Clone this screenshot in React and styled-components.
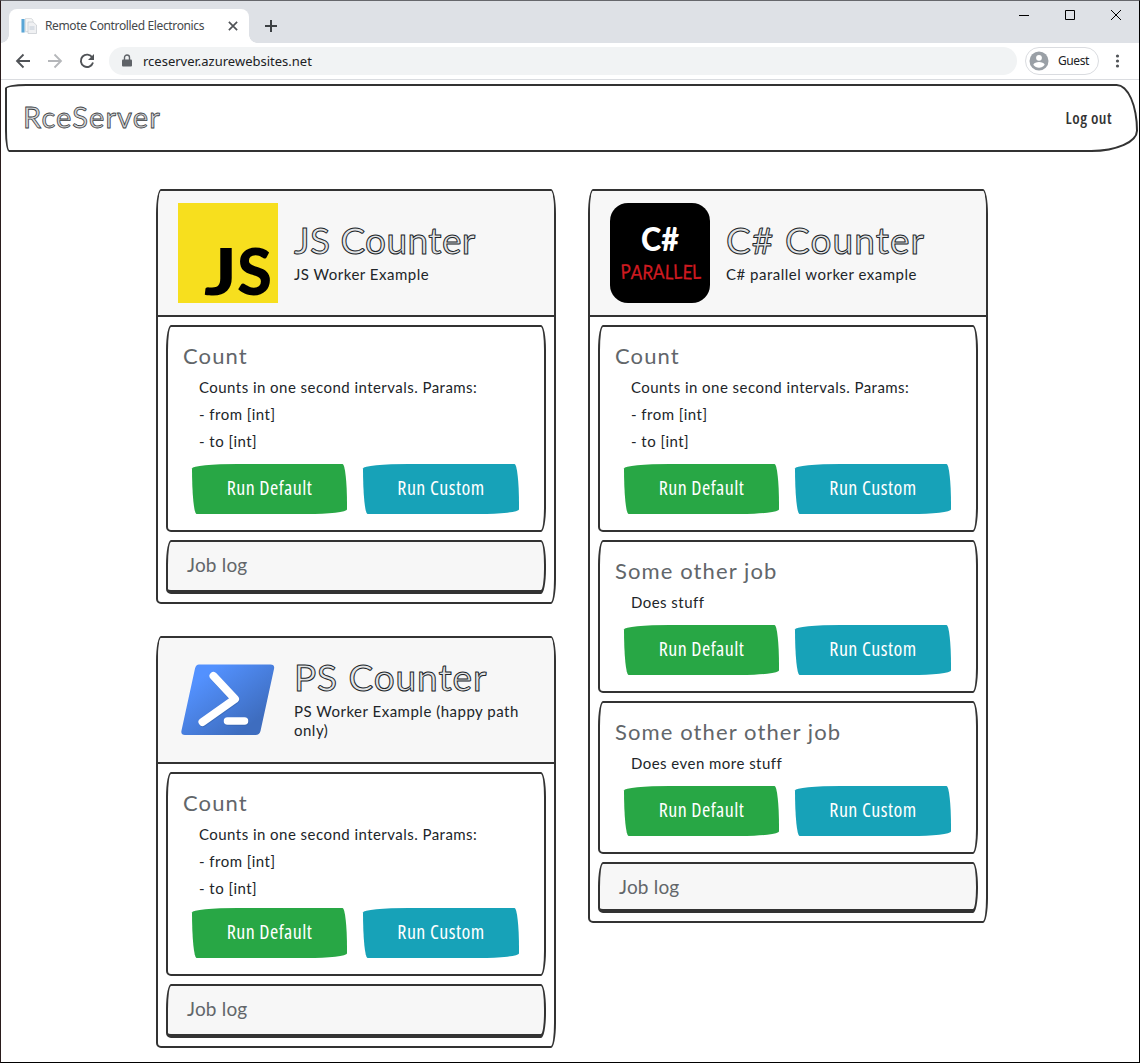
import React from 'react';
import styled, { createGlobalStyle, css } from 'styled-components';

const Global = createGlobalStyle`
  *, *::before, *::after { box-sizing: border-box; }
  body { margin: 0; background: #fff; overflow: hidden; }
`;

const ui = '"Noto Sans", "Open Sans", sans-serif';
const sketch = 'Lato, "Open Sans", sans-serif';
const hand = '"Open Sans", "Noto Sans", sans-serif';
const ink = '#333';

const Window = styled.div`
  width: 1140px; height: 1063px; display: flex; flex-direction: column;
  border: 1px solid #000; border-top-color: #66676c; border-left-color: #2a1c1c;
  background: #fff;
`;
const TabStrip = styled.div`
  height: 42px; flex: none; display: flex; align-items: flex-end;
  background: #dee1e6; padding-left: 8px;
`;
const Tab = styled.div`
  position: relative; width: 240px; height: 34px; display: flex; align-items: center;
  padding: 0 10px 0 12px; background: #fff; border-radius: 8px 8px 0 0;
  &::before, &::after {
    content: ''; position: absolute; bottom: 0; width: 8px; height: 8px;
  }
  &::before { left: -8px; background: radial-gradient(circle at 0 0, transparent 7.5px, #fff 8px); }
  &::after { right: -8px; background: radial-gradient(circle at 100% 0, transparent 7.5px, #fff 8px); }
`;
const TabTitle = styled.span`
  flex: 1; margin-left: 8px; font: 12px/16px ${ui}; letter-spacing: -0.36px; color: #45484c; white-space: nowrap;
`;
const NewTab = styled.div`
  display: flex; align-items: center; height: 34px; margin-left: 14px;
`;
const Controls = styled.div`
  display: flex; align-self: flex-start; gap: 36px; margin: 8px 18px 0 auto;
`;
const Toolbar = styled.div`
  height: 37px; flex: none; display: flex; align-items: center;
  border-bottom: 1px solid #dadce0; padding: 0 14px 0 14px;
`;
const NavIcons = styled.div`display: flex; gap: 16px;`;
const Address = styled.div`
  flex: 1; height: 28px; margin: 0 8px 0 14px; padding-left: 12px; border-radius: 14px;
  display: flex; align-items: center; gap: 10px; background: #f1f3f4;
  font: 13px/18px ${ui}; color: #202124;
`;
const Guest = styled.div`
  width: 74px; height: 28px; display: flex; align-items: center; gap: 9px; padding-left: 3px;
  border: 1px solid #dadce0; border-radius: 14px; font: 12px/16px ${ui}; letter-spacing: -.4px; color: #202124;
  margin-right: 10px;
`;
const Navbar = styled.header`
  flex: none; height: 68px; margin: 4px 1px 0 4px; padding: 0 24px 0 16px;
  display: flex; align-items: center; justify-content: space-between;
  border: 2px solid ${ink}; border-radius: 25px 25px 55px 5px / 5px 55px 25px 25px;
`;
const outline = css`
  font-family: ${sketch}; font-weight: 400; white-space: nowrap; margin: 0;
`;
const Brand = styled.h1`
  ${outline} font-size: 29px; line-height: 36px; letter-spacing: 1.15px; padding-bottom: 3px;
  color: #d3d6d8; -webkit-text-stroke: .8px #3d4043;
`;
const Logout = styled.a`
  font: 600 16px/20px ${hand}; font-stretch: 75%; letter-spacing: .5px; color: ${ink};
`;
const Board = styled.main`
  display: flex; align-items: flex-start; gap: 32px; padding: 37px 0 0 155px;
`;
const Column = styled.div`display: flex; flex-direction: column; gap: 32px; width: 400px;`;
const Card = styled.section`
  border: 2px solid ${ink}; border-radius: 5px 5px 5px 5px / 25px 25px 25px 5px; overflow: hidden;
`;
const CardHeader = styled.div`
  height: 126px; display: flex; align-items: center; gap: 16px; padding: 0 20px;
  background: #f7f7f7; border-bottom: 2px solid ${ink};
`;
const Heading = styled.div`flex: 1; min-width: 0; padding-bottom: 1px;`;
const Name = styled.h2`
  ${outline} font-size: 37px; line-height: 36px; padding-bottom: 7px; letter-spacing: ${p => p.$track}px;
  color: #e3e5e7; -webkit-text-stroke: 1px #212529;
`;
const Sub = styled.div`
  font: 15px/19px ${sketch}; letter-spacing: .5px; color: #212529;
`;
const CardBody = styled.div`display: flex; flex-direction: column; gap: 8px; padding: 8px;`;
const frame = css`
  border: 2px solid ${ink}; border-radius: 5px 5px 5px 5px / 25px 25px 25px 5px;
`;
const Job = styled.article`${frame} padding: 15px 15px 16px;`;
const JobTitle = styled.h3`
  ${outline} font-size: 22px; line-height: 28px; margin-bottom: 4px; letter-spacing: 1.1px;
  color: #62666a;
`;
const Line = styled.div`
  padding-left: 16px; font: 15px/27px ${sketch}; letter-spacing: .46px; color: #212529; white-space: nowrap;
`;
const Buttons = styled.div`
  display: grid; grid-template-columns: 155px 1fr; gap: 16px; margin: ${p => p.$gap + 1}px 10px 0 9px;
`;
const Button = styled.button`
  height: 50px; padding: 0 0 2px; border: 0; color: #fff; background: ${p => p.$color};
  border-radius: 255px 25px 225px 25px / 25px 225px 25px 255px;
  font: 400 20px/24px ${hand}; font-stretch: 78%; letter-spacing: .45px;
`;
const Log = styled.div`
  ${frame} border-bottom-width: 4px; height: ${p => p.$height}px; padding: 9px 19px;
  background: #f7f7f7;
`;
const LogTitle = styled(JobTitle)`font-size: 19px; margin: 0; letter-spacing: .2px;`;

const TabIcon = () => (
  <svg width="16" height="16" viewBox="0 0 16 16">
    <path d="M.5 1H12v13.500H.5z" fill="#e4edf3" />
    <path d="M.5 1h3v13.500h-3z" fill="#5aa6d6" />
    <path d="M4.500.5h6l1.500 2v11h-7.500z" fill="#f6f6f6" stroke="#d2d5d9" strokeWidth=".7" />
    <path d="M7 4h5l3.500 3v8.500H7z" fill="#f0f1f3" stroke="#c4c8ce" strokeWidth=".7" />
    <path d="M8.500 9h5M8.500 11h5" stroke="#c0cad6" />
  </svg>
);
const Stroke = ({ size = 16, d, color = '#505357', w = 1.8 }) => (
  <svg width={size} height={size} viewBox="0 0 16 16" fill="none" stroke={color} strokeWidth={w}><path d={d} /></svg>
);
const Logo = styled.svg`flex: none; overflow: visible;`;
const JsLogo = () => (
  <Logo width="100" height="100" viewBox="0 0 100 100">
    <path d="M0 0h100v100H0z" fill="#f7df1e" />
    <g fontFamily="Lato" fontWeight="900" fontSize="64">
      <text x="26" y="92" textLength="33" lengthAdjust="spacingAndGlyphs">J</text>
      <text x="59" y="92" textLength="35" lengthAdjust="spacingAndGlyphs">S</text>
    </g>
  </Logo>
);
const CsLogo = () => (
  <Logo width="100" height="100" viewBox="0 0 100 100">
    <rect width="100" height="100" rx="18" />
    <text x="31" y="48" textLength="38" lengthAdjust="spacingAndGlyphs" fill="#fff" fontFamily="Lato" fontWeight="900" fontSize="32">C#</text>
    <text x="11" y="76" textLength="80" lengthAdjust="spacingAndGlyphs" rotate="-4 3 4 -2 3 -3 3 -2" fill="#cf1a20" stroke="#cf1a20" strokeWidth=".3" fontFamily="Lato" fontSize="20">PARALLEL</text>
  </Logo>
);
const PsLogo = () => (
  <Logo width="100" height="100" viewBox="0 0 100 100">
    <defs>
      <linearGradient id="ps" x1="0" y1="0" x2="1" y2="1">
        <stop offset="0" stopColor="#5391fe" /><stop offset=".2" stopColor="#5391fe" /><stop offset=".8" stopColor="#3e6dbf" />
      </linearGradient>
    </defs>
    <path d="M21 14.500h71.500q4.500 0 3.500 4.500L82.500 81q-1 4-5 4H7q-4.500 0-3.500-4.500L17 18.500q1-4 4-4z" fill="url(#ps)" />
    <g fill="none" stroke="#2c5591" strokeOpacity=".35" strokeLinecap="round" strokeLinejoin="round" transform="translate(.5 1)">
      <path d="M35.500 26L57 49 24.500 72" strokeWidth="8" /><path d="M49.500 71h17" strokeWidth="7.500" />
    </g>
    <g fill="none" stroke="#fff" strokeLinecap="round" strokeLinejoin="round">
      <path d="M35.500 26L57 49 24.500 72" strokeWidth="8" /><path d="M49.500 71h17" strokeWidth="7.500" />
    </g>
  </Logo>
);

const COUNT = { title: 'Count', lines: ['Counts in one second intervals. Params:', '- from [int]', '- to [int]'] };

const Worker = ({ logo, name, track, sub, jobs, gap = 8, logHeight = 54 }) => (
  <Card>
    <CardHeader>
      {logo}
      <Heading><Name $track={track}>{name}</Name><Sub>{sub}</Sub></Heading>
    </CardHeader>
    <CardBody>
      {jobs.map(job => (
        <Job key={job.title}>
          <JobTitle>{job.title}</JobTitle>
          {job.lines.map(l => <Line key={l}>{l}</Line>)}
          <Buttons $gap={gap}>
            <Button $color="#28a745">Run Default</Button>
            <Button $color="#17a2b8">Run Custom</Button>
          </Buttons>
        </Job>
      ))}
      <Log $height={logHeight}><LogTitle>Job log</LogTitle></Log>
    </CardBody>
  </Card>
);

export default function App() {
  return (
    <Window>
      <Global />
      <TabStrip>
        <Tab>
          <TabIcon />
          <TabTitle>Remote Controlled Electronics</TabTitle>
          <Stroke size={12} d="M2.500 2.500l11 11M13.500 2.500l-11 11" w={2.200} />
        </Tab>
        <NewTab><Stroke d="M8 2v12M2 8h12" w={2} color="#3c4043" /></NewTab>
        <Controls>
          <svg width="10" height="11"><path d="M0 6.500h10" stroke="#000" /></svg>
          <svg width="10" height="11"><path d="M.5 1.500h9v9h-9z" fill="none" stroke="#000" /></svg>
          <svg width="10" height="11"><path d="M0 1l10 10M10 1L0 11" stroke="#000" /></svg>
        </Controls>
      </TabStrip>
      <Toolbar>
        <NavIcons>
          <Stroke d="M15 8H2M8.500 1.500L2 8l6.500 6.500" />
          <Stroke d="M1 8h13M7.500 1.500L14 8l-6.500 6.500" color="#b5b7ba" />
          <svg width="16" height="16" viewBox="0 0 16 16"><path d="M13.300 4.500A6.200 6.200 0 1 0 14 9.500" fill="none" stroke="#505357" strokeWidth="1.900" /><path d="M15 1v6H9z" fill="#505357" /></svg>
        </NavIcons>
        <Address>
          <svg width="12" height="14" viewBox="0 0 12 14"><path d="M2 5.500h8q1 0 1 1v5q0 1-1 1H2q-1 0-1-1v-5q0-1 1-1z" fill="#5f6368" /><path d="M3.500 6V3.500a2.500 2.500 0 0 1 5 0V6" fill="none" stroke="#5f6368" strokeWidth="1.400" /></svg>
          rceserver.azurewebsites.net
        </Address>
        <Guest>
          <svg width="20" height="20" viewBox="0 0 20 20"><circle cx="10" cy="10" r="9.500" fill="#9aa0a6" /><circle cx="10" cy="6.800" r="2.900" fill="#fff" /><path d="M4.300 13.800c1.200-3.700 10.200-3.700 11.400 0-2.700 4-8.700 4-11.400 0z" fill="#fff" /></svg>
          Guest
        </Guest>
        <svg width="16" height="16" fill="#505357"><circle cx="8.500" cy="3" r="1.600" /><circle cx="8.500" cy="8" r="1.600" /><circle cx="8.500" cy="13" r="1.600" /></svg>
      </Toolbar>
      <Navbar><Brand>RceServer</Brand><Logout>Log out</Logout></Navbar>
      <Board>
        <Column>
          <Worker logo={<JsLogo />} name="JS Counter" track={.4} sub="JS Worker Example" jobs={[COUNT]} />
          <Worker logo={<PsLogo />} name="PS Counter" track={.9} sub="PS Worker Example (happy path only)" jobs={[COUNT]} gap={5} />
        </Column>
        <Column>
          <Worker logo={<CsLogo />} name="C# Counter" track={1.1} sub="C# parallel worker example" logHeight={51}
            jobs={[COUNT, { title: 'Some other job', lines: ['Does stuff'] }, { title: 'Some other other job', lines: ['Does even more stuff'] }]} />
        </Column>
      </Board>
    </Window>
  );
}
